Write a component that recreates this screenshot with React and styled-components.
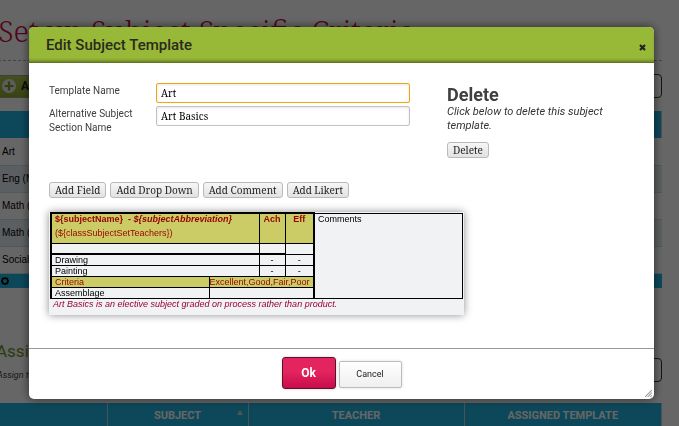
import React from "react";
import styled, { createGlobalStyle } from "styled-components";

const sans = '"Roboto", "Liberation Sans", sans-serif';
const serif = '"Noto Serif", "Liberation Serif", serif';

const GlobalStyle = createGlobalStyle`
  * { box-sizing: border-box; }
  body {
    margin: 0;
    overflow: hidden;
    background: #fff;
    color: #404044;
    font-family: ${sans};
  }
  button, input { font: inherit; color: inherit; margin: 0; }
  h1, h2, h3, p { margin: 0; }
`;

/* ---------- page behind the dialog ---------- */

const Page = styled.main`
  height: 100vh;
  overflow: hidden;
  padding: 8px 17px 0 0;
`;

const PageTitle = styled.h1`
  height: 53px;
  margin-left: -2px;
  border-bottom: 1px dashed #aaa;
  color: #c8104a;
  font: 300 30px/46px ${serif};
  white-space: nowrap;
`;

const Toolbar = styled.div`
  display: flex;
  align-items: center;
  justify-content: space-between;
  height: 24px;
  margin-top: 13px;
`;

const AddButton = styled.button`
  display: flex;
  align-items: center;
  gap: 5px;
  height: 23px;
  padding: 0 12px 0 2px;
  border: 1px solid #a0a07a;
  border-left: 0;
  background: linear-gradient(#a9c64f, #8ba930);
  color: #222;
  font-size: 12px;
  font-weight: 700;
`;

const SearchBox = styled.input`
  width: 150px;
  height: 24px;
  padding: 0 6px;
  border: 1px solid #333;
  border-radius: 4px;
  background: #fff;
  font-size: 11px;
  text-align: right;
`;

const DataTable = styled.table`
  width: 100%;
  margin-top: 13px;
  border-collapse: collapse;
  table-layout: fixed;
`;

const HeadCell = styled.th`
  height: ${(p) => (p.$tall ? 27 : 24)}px;
  padding: 0 9px;
  background: #21b2e1;
  border-right: 1px solid #b8ccd2;
  color: #fff;
  font-size: 11px;
  font-weight: 700;
  text-align: center;
`;

const SortHead = styled.span`
  display: flex;
  align-items: center;
  justify-content: center;
  position: relative;
`;

const SortArrow = styled.svg`
  position: absolute;
  right: -4px;
  top: 1px;
`;

const SubjectCell = styled.td`
  height: 27px;
  padding: 0 2px;
  border-bottom: 1px solid #bfe0ea;
  background: ${(p) => (p.$shaded ? "#e4eef2" : "#fff")};
  color: #000;
  font: 10px "Liberation Sans", Arial, sans-serif;
  white-space: nowrap;
`;

const FootCell = styled.td`
  height: 15px;
  padding: 0;
  background: #21b2e1;
  line-height: 0;
`;

const SectionTitle = styled.h2`
  margin: 53px 0 0 -4px;
  color: #6f9417;
  font-size: 17px;
  font-weight: 400;
  line-height: 20px;
`;

const SectionRow = styled.div`
  display: flex;
  align-items: flex-start;
  justify-content: space-between;
  height: 32px;
  margin-left: -3px;
  margin-top: -3px;
`;

const SectionNote = styled.p`
  padding-top: 10px;
  font-size: 9px;
  line-height: 14px;
  font-style: italic;
`;

/* ---------- dialog ---------- */

const Overlay = styled.div`
  position: fixed;
  inset: 0;
  display: flex;
  padding: 27px 25px 27px 29px;
  background: rgba(0, 0, 0, 0.6);
`;

const Dialog = styled.section`
  position: relative;
  display: flex;
  flex-direction: column;
  flex: 1;
  border-radius: 5px;
  background: #fff;
  box-shadow: 0 0 10px rgba(0, 0, 0, 0.6);
`;

const DialogHeader = styled.header`
  display: flex;
  align-items: center;
  justify-content: space-between;
  height: 36px;
  padding: 0 6px 0 17px;
  border-radius: 5px 5px 0 0;
  background: #98b837;
  box-shadow: inset 0 -4px 4px -3px rgba(0, 0, 0, 0.6);
`;

const DialogTitle = styled.h2`
  color: #2a2a20;
  font-size: 15px;
  font-weight: 500;
  line-height: 20px;
`;

const CloseButton = styled.button`
  display: flex;
  padding: 2px;
  margin-top: 4px;
  border: 0;
  background: none;
`;

const DialogBody = styled.div`
  flex: 1;
  padding: 20px;
`;

const TopRow = styled.div`
  display: flex;
  gap: 37px;
  height: 99px;
`;

const Fields = styled.div`
  display: grid;
  grid-template-columns: 107px minmax(0, 254px);
  grid-auto-rows: min-content;
  row-gap: 3px;
`;

const Label = styled.label`
  padding-top: 1px;
  padding-right: 18px;
  font-size: 10px;
  line-height: 14px;
`;

const TextInput = styled.input`
  width: 100%;
  height: 20px;
  padding: 0 4px;
  border: 1px solid ${(p) => (p.$active ? "#f5a50c" : "#c2c2c2")};
  border-radius: 2px;
  background: #fff;
  box-shadow: inset 0 1px 3px rgba(0, 0, 0, 0.1);
  color: #000;
  font: 10px ${serif};
  outline: none;
`;

const DeletePanel = styled.div`
  width: 165px;
  padding-top: 2px;
`;

const DeleteTitle = styled.h3`
  font-size: 18px;
  font-weight: 700;
  line-height: 20px;
`;

const DeleteNote = styled.p`
  margin-bottom: 9px;
  color: #333;
  font-size: 11px;
  font-style: italic;
  line-height: 14px;
`;

const SmallButton = styled.button`
  display: block;
  height: 16px;
  padding: 0 5px;
  border: 1px solid #b9b9b9;
  border-radius: 3px;
  background: linear-gradient(#f6f6f6, #e2e2e2);
  color: #222;
  font: 10px/13px ${serif};
  white-space: nowrap;
`;

const ButtonRow = styled.div`
  display: flex;
  gap: 4px;
`;

const Preview = styled.div`
  width: 415px;
  max-width: 100%;
  margin-top: 14px;
  padding: 0 1px;
  background: #f0f2f4;
  box-shadow: 0 0 8px rgba(0, 0, 0, 0.45);
  font-family: "Liberation Sans", Arial, sans-serif;
  color: #000;
`;

const Report = styled.table`
  width: 100%;
  border-collapse: collapse;
  table-layout: fixed;
  font-size: 9px;
  line-height: 10px;
`;

const Cell = styled.td`
  height: ${(p) => p.$height || 11}px;
  padding: 0 ${(p) => (p.$tight ? 0 : 3)}px;
  border: 1px solid #000;
  border-width: ${(p) => p.$borders || "1px"};
  background: ${(p) => (p.$gold ? "#cccc66" : "transparent")};
  color: ${(p) => (p.$gold ? "#990000" : "#000")};
  font-weight: ${(p) => (p.$bold ? 700 : 400)};
  text-align: ${(p) => (p.$center ? "center" : "left")};
  vertical-align: top;
  white-space: nowrap;
`;

const Line = styled.div`
  line-height: 14px;
  margin-top: ${(p) => (p.$first ? -2 : 0)}px;
  font-weight: ${(p) => (p.$first ? 700 : 400)};
`;

const ReportNote = styled.p`
  padding: 0 3px 6px;
  color: #990033;
  font-size: 9px;
  font-style: italic;
  line-height: 10px;
`;

const DialogFooter = styled.footer`
  display: flex;
  align-items: center;
  justify-content: center;
  gap: 3px;
  height: 51px;
  border-top: 1px solid #999;
`;

const OkButton = styled.button`
  width: 54px;
  height: 32px;
  margin-bottom: 2px;
  border: 1px solid #5c1030;
  border-radius: 3px;
  background: linear-gradient(#e4245f 45%, #c60d4b);
  box-shadow: 0 0 3px rgba(0, 0, 0, 0.2);
  color: #fff;
  font-size: 12px;
  font-weight: 700;
`;

const CancelButton = styled.button`
  width: 63px;
  height: 27px;
  border: 1px solid #bcbcbc;
  border-radius: 2px;
  background: linear-gradient(#fff, #efefef);
  box-shadow: 0 0 3px rgba(0, 0, 0, 0.15);
  color: #222;
  font-size: 9px;
`;

const Grip = styled.svg`
  position: absolute;
  right: 2px;
  bottom: 2px;
`;

const subjects = ["Art", "Eng (Main)", "Math (Main)", "Math (Extended)", "Social Studies"];
const scored = ["Drawing", "Painting"];
const adders = ["Add Field", "Add Drop Down", "Add Comment", "Add Likert"];

function PlusIcon() {
  return (
    <svg width="14" height="14" viewBox="0 0 14 14" aria-hidden="true">
      <circle cx="7" cy="7" r="7" fill="#e6e6e6" />
      <path d="M7 2.5v9M2.5 7h9" stroke="#7b9a2a" strokeWidth="2.2" />
    </svg>
  );
}

function Background() {
  return (
    <Page>
      <PageTitle>Set up Subject Specific Criteria</PageTitle>
      <Toolbar>
        <AddButton type="button"><PlusIcon />Add</AddButton>
        <SearchBox aria-label="Search subjects" />
      </Toolbar>
      <DataTable>
        <thead>
          <tr><HeadCell $tall aria-label="Subject" /></tr>
        </thead>
        <tbody>
          {subjects.map((name, i) => (
            <tr key={name}><SubjectCell $shaded={i % 2 === 1}>{name}</SubjectCell></tr>
          ))}
          <tr>
            <FootCell>
              <svg width="10" height="10" viewBox="0 0 10 10" aria-hidden="true">
                <path d="M5 1v8M1 5h8M2 2l6 6M8 2l-6 6" stroke="#000" strokeWidth="1.4" />
                <circle cx="5" cy="5" r="2.8" fill="#21b2e1" stroke="#000" strokeWidth="1.6" />
              </svg>
            </FootCell>
          </tr>
        </tbody>
      </DataTable>
      <SectionTitle>Assigned Templates</SectionTitle>
      <SectionRow>
        <SectionNote>Assign templates</SectionNote>
        <SearchBox aria-label="Search templates" />
      </SectionRow>
      <DataTable>
        <colgroup>
          <col width="107" />
          <col width="141" />
          <col width="216" />
          <col />
        </colgroup>
        <thead>
          <tr>
            <HeadCell aria-label="Select" />
            <HeadCell>
              <SortHead>
                SUBJECT
                <SortArrow width="6" height="5" viewBox="0 0 6 5"><path d="M3 0l3 5H0z" fill="#ccc" /></SortArrow>
              </SortHead>
            </HeadCell>
            <HeadCell>TEACHER</HeadCell>
            <HeadCell>ASSIGNED TEMPLATE</HeadCell>
          </tr>
        </thead>
      </DataTable>
    </Page>
  );
}

function ReportPreview() {
  return (
    <Preview>
      <Report>
        <colgroup>
          <col width="158" />
          <col width="50" />
          <col width="26" />
          <col width="29" />
          <col />
        </colgroup>
        <tbody>
          <tr>
            <Cell $gold colSpan={2} $height={30} $borders="2px 1px 1px 2px">
              <Line $first>{"${subjectName}"}&nbsp; - <em>{"${subjectAbbreviation}"}</em></Line>
              <Line>{"(${classSubjectSetTeachers})"}</Line>
            </Cell>
            <Cell $gold $bold $center $borders="2px 1px 1px">Ach</Cell>
            <Cell $gold $bold $center $borders="2px 2px 1px 1px">Eff</Cell>
            <Cell rowSpan={6} $borders="1px 1px 1px 2px">Comments</Cell>
          </tr>
          <tr>
            <Cell colSpan={2} $borders="1px 1px 2px 2px" />
            <Cell $borders="1px 1px 2px" />
            <Cell $borders="1px 2px 1px 1px" />
          </tr>
          {scored.map((name) => (
            <tr key={name}>
              <Cell colSpan={2} $borders="1px 1px 1px 2px">{name}</Cell>
              <Cell $center>-</Cell>
              <Cell $center $borders="1px 2px 1px 1px">-</Cell>
            </tr>
          ))}
          <tr>
            <Cell $gold $borders="1px 1px 1px 2px">Criteria</Cell>
            <Cell $gold $tight colSpan={3} $borders="1px 2px 1px 1px">Excellent,Good,Fair,Poor</Cell>
          </tr>
          <tr>
            <Cell $borders="1px 1px 1px 2px">Assemblage</Cell>
            <Cell colSpan={3} $borders="1px 2px 1px 1px" />
          </tr>
        </tbody>
      </Report>
      <ReportNote>Art Basics is an elective subject graded on process rather than product.</ReportNote>
    </Preview>
  );
}

export default function App() {
  return (
    <>
      <GlobalStyle />
      <Background />
      <Overlay>
        <Dialog role="dialog" aria-labelledby="dialog-title">
          <DialogHeader>
            <DialogTitle id="dialog-title">Edit Subject Template</DialogTitle>
            <CloseButton type="button" aria-label="Close">
              <svg width="7" height="7" viewBox="0 0 7 7"><path d="M1 1l5 5M6 1L1 6" stroke="#222" strokeWidth="2.2" /></svg>
            </CloseButton>
          </DialogHeader>
          <DialogBody>
            <TopRow>
              <Fields>
                <Label htmlFor="template-name">Template Name</Label>
                <TextInput id="template-name" $active defaultValue="Art" />
                <Label htmlFor="section-name">Alternative Subject Section Name</Label>
                <TextInput id="section-name" defaultValue="Art Basics" />
              </Fields>
              <DeletePanel>
                <DeleteTitle>Delete</DeleteTitle>
                <DeleteNote>Click below to delete this subject template.</DeleteNote>
                <SmallButton type="button">Delete</SmallButton>
              </DeletePanel>
            </TopRow>
            <ButtonRow>
              {adders.map((text) => <SmallButton type="button" key={text}>{text}</SmallButton>)}
            </ButtonRow>
            <ReportPreview />
          </DialogBody>
          <DialogFooter>
            <OkButton type="button">Ok</OkButton>
            <CancelButton type="button">Cancel</CancelButton>
          </DialogFooter>
          <Grip width="7" height="7" viewBox="0 0 8 8" aria-hidden="true">
            <path d="M0 8l8-8M3 8l5-5M6 8l2-2" stroke="#999" strokeWidth="1.2" />
          </Grip>
        </Dialog>
      </Overlay>
    </>
  );
}
